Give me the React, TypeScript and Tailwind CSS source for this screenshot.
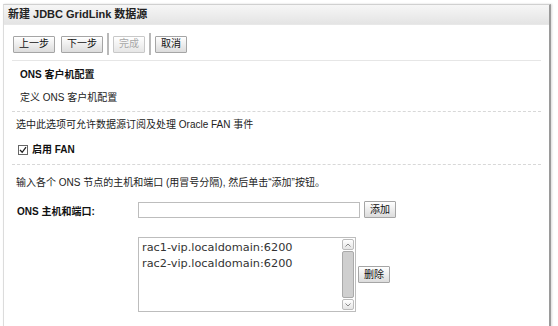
import React from 'react';

const font = { fontFamily: '"Liberation Sans", "Noto Sans CJK SC", sans-serif' };
const mono = { fontFamily: '"DejaVu Sans", sans-serif' };

const Btn: React.FC<{ children: React.ReactNode; disabled?: boolean; className?: string }> = ({ children, disabled, className }) => (
  <button
    disabled={disabled}
    className={`h-[17px] px-[5px] text-[10px] leading-none border rounded-[1px] bg-gradient-to-b from-white to-[#dcdcdc] ${
      disabled ? 'border-[#c8c8c8] text-[#a8a8a8] from-[#f4f4f4] to-[#e6e6e6]' : 'border-[#a5a5a5] text-[#111]'
    } ${className ?? ''}`}
  >
    {children}
  </button>
);

const Divider = () => <div className="w-[2px] h-[22px] bg-[#b9b9b9] mx-[4px]" />;

const App: React.FC = () => {
  return (
    <div className="w-[558px] h-[326px] bg-white pt-[4px] pl-[3px] overflow-hidden" style={font}>
      <div className="w-[548px] h-[330px] border-l border-[#dcdcdc] border-t border-t-[#d0d0d0] border-r-2 border-r-[#9a9a9a] shadow-[1px_0_2px_rgba(0,0,0,0.15)] bg-white">
        {/* Header */}
        <div className="h-[20px] flex items-center pl-[4px] bg-gradient-to-b from-[#f6f6f6] to-[#e4e4e4] border-b border-[#e8e8e8]">
          <span className="text-[11px] font-bold text-[#222]">新建 JDBC GridLink 数据源</span>
        </div>

        {/* Toolbar */}
        <div className="flex items-center pl-[9px] pt-[8px] pb-[5px]">
          <Btn>上一步</Btn>
          <div className="w-[6px]" />
          <Btn>下一步</Btn>
          <Divider />
          <Btn disabled>完成</Btn>
          <Divider />
          <Btn>取消</Btn>
        </div>

        <div className="mx-[8px] border-t border-[#e6e6e6]" />

        <div className="pl-[16px] pt-[6px] text-[10px] font-bold text-[#111]">ONS 客户机配置</div>
        <div className="pl-[16px] pt-[8px] pb-[6px] text-[10px] text-[#222]">定义 ONS 客户机配置</div>

        <div className="mx-[8px] border-t border-dashed border-[#d8d8d8]" />

        <div className="pl-[12px] pt-[5px] text-[10px] text-[#222]">选中此选项可允许数据源订阅及处理 Oracle FAN 事件</div>

        <label className="flex items-center pl-[14px] pt-[10px] pb-[7px] gap-[4px]">
          <span className="w-[10px] h-[10px] border border-[#666] flex items-center justify-center bg-white">
            <svg width="8" height="8" viewBox="0 0 8 8">
              <path d="M1 4 L3.2 6.3 L7 1.2" fill="none" stroke="#222" strokeWidth="1.3" />
            </svg>
          </span>
          <span className="text-[10px] font-bold text-[#111]">启用 FAN</span>
        </label>

        <div className="mx-[8px] border-t border-dashed border-[#d8d8d8]" />

        <div className="pl-[12px] pt-[10px] text-[10px] text-[#222]">输入各个 ONS 节点的主机和端口 (用冒号分隔), 然后单击“添加”按钮。</div>

        <div className="flex pt-[11px]">
          <div className="w-[134px] pl-[13px] pt-[3px] text-[10px] font-bold text-[#111]">ONS 主机和端口:</div>
          <div className="flex flex-col">
            <div className="flex items-center gap-[4px]">
              <input className="w-[222px] h-[16px] border border-[#bdbdbd] bg-white outline-none" />
              <Btn>添加</Btn>
            </div>
            <div className="flex items-center gap-[2px] pt-[19px]">
              <div className="w-[218px] h-[75px] border border-[#bdbdbd] bg-white flex">
                <div className="flex-1 pl-[3px] pt-[2px] text-[11.3px] leading-[16px] text-[#333]" style={mono}>
                  <div>rac1-vip.localdomain:6200</div>
                  <div>rac2-vip.localdomain:6200</div>
                </div>
                <div className="w-[12px] mr-[1px] my-[1px] flex flex-col">
                  <div className="h-[11px] border border-[#bbb] rounded-[2px] bg-gradient-to-b from-white to-[#e4e4e4] flex items-center justify-center">
                    <svg width="6" height="4" viewBox="0 0 6 4"><path d="M0.5 3.5 L3 1 L5.5 3.5" fill="none" stroke="#888" /></svg>
                  </div>
                  <div className="flex-1 my-[1px] border border-[#aaa] rounded-[2px] bg-[#cfcfcf]" />
                  <div className="h-[11px] border border-[#bbb] rounded-[2px] bg-gradient-to-b from-white to-[#e4e4e4] flex items-center justify-center">
                    <svg width="6" height="4" viewBox="0 0 6 4"><path d="M0.5 0.5 L3 3 L5.5 0.5" fill="none" stroke="#888" /></svg>
                  </div>
                </div>
              </div>
              <Btn>删除</Btn>
            </div>
          </div>
        </div>
      </div>
    </div>
  );
};

export default App;
